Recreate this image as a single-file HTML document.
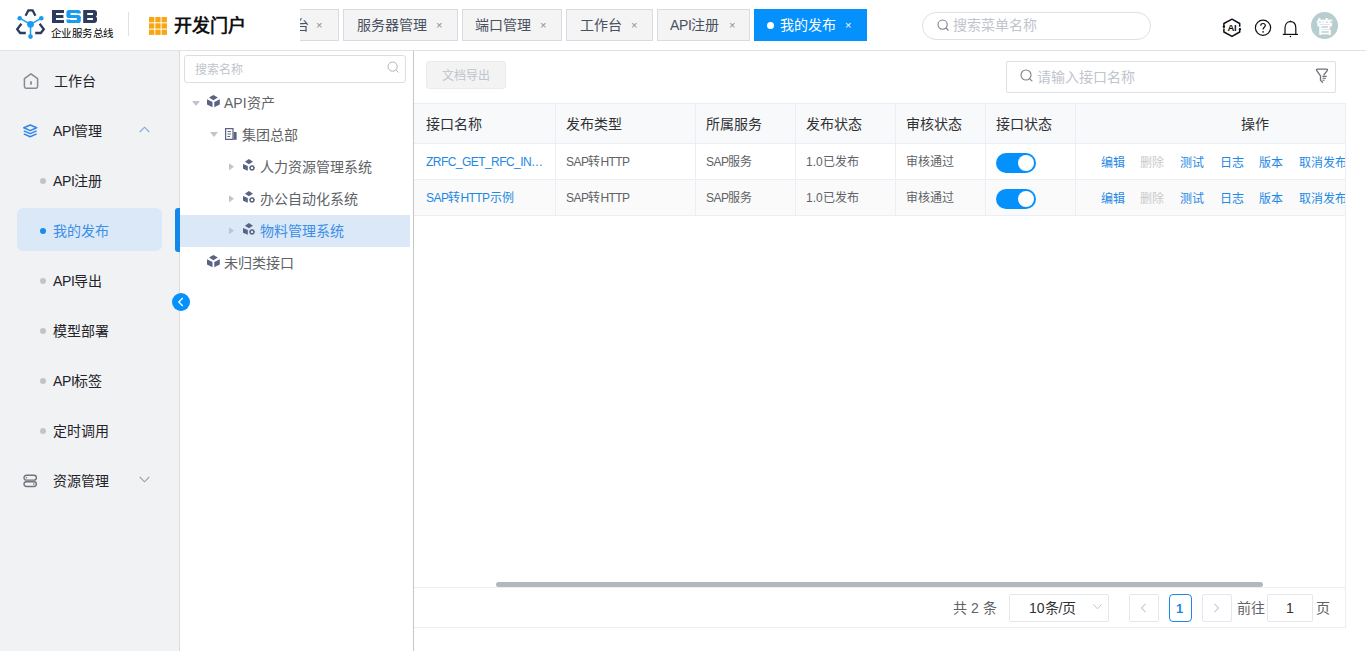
<!DOCTYPE html>
<html lang="zh-CN">
<head>
<meta charset="utf-8">
<style>
*{box-sizing:border-box;margin:0;padding:0}
html,body{width:1366px;height:651px;overflow:hidden;background:#fff;font-family:"Liberation Sans",sans-serif;color:#303133}
.a{position:absolute}
.t{position:absolute;white-space:nowrap;line-height:1}
/* header */
#hdr{position:absolute;left:0;top:0;width:1366px;height:51px;background:#fff;border-bottom:1px solid #e2e2e2}
.tab{position:absolute;top:9px;height:32px;background:#f4f4f5;border:1px solid #d8dbe2;font-size:14px;color:#495060}
.tab .tx{position:absolute;top:7px;line-height:16px;white-space:nowrap}
.tab .x{position:absolute;top:7px;line-height:16px;font-size:11px;color:#8a8f99}
/* sidebar */
#side{position:absolute;left:0;top:51px;width:180px;height:600px;background:#f1f2f4;border-right:1px solid #dcdcdc}
.mi{position:absolute;left:53px;font-size:14px;color:#1f2329;line-height:16px;white-space:nowrap}
.dot{position:absolute;left:40px;width:6px;height:6px;border-radius:50%;background:#c2c4c8}
/* tree */
#tree{position:absolute;left:180px;top:51px;width:234px;height:600px;background:#fff;border-right:1px solid #c6c6c6}
.tn{position:absolute;font-size:14px;color:#606266;line-height:16px;white-space:nowrap}
/* main */
.th{position:absolute;top:116px;font-size:14px;color:#303133;line-height:16px;white-space:nowrap}
.td{position:absolute;font-size:12px;color:#606266;line-height:14px;white-space:nowrap}
.la{letter-spacing:-0.55px}
.lk{color:#1e88e5}
.vl{position:absolute;width:1px;background:#ebeef5}
.hl{position:absolute;height:1px;background:#ebeef5}
.sw{position:absolute;left:996px;width:40px;height:20px;border-radius:10px;background:#0591fc}
.sw:after{content:"";position:absolute;right:2px;top:2px;width:16px;height:16px;border-radius:50%;background:#fff}
.op{position:absolute;font-size:12px;color:#1e88e5;line-height:14px;white-space:nowrap}
.pb{position:absolute;top:594px;height:28px;border:1px solid #e4e7ed;border-radius:2px;background:#fff}
</style>
</head>
<body>
<!-- HEADER -->
<div id="hdr">
  <!-- logo icon -->
  <svg class="a" style="left:15px;top:8px" width="32" height="32" viewBox="0 0 32 32">
    <path d="M10.6 7.8 L13.4 2.3 L17.6 2.3 L20.4 7.8" fill="none" stroke="#2c3b5e" stroke-width="2.3" stroke-linejoin="miter"/>
    <path d="M6.4 15.8 L2.2 21.2 L5.2 25 L10.8 25" fill="none" stroke="#2c3b5e" stroke-width="2.3"/>
    <path d="M24.6 15.8 L28.8 21.2 L25.8 25 L20.2 25" fill="none" stroke="#2c3b5e" stroke-width="2.3"/>
    <path d="M4.7 10.2 L15.5 16.3 L26.3 10.2 M15.5 16.3 L15.5 28.6" fill="none" stroke="#1a9bf2" stroke-width="1.5"/>
    <circle cx="15.5" cy="16.3" r="3.4" fill="#1a9bf2"/>
    <circle cx="4.7" cy="10.2" r="2.3" fill="#1a9bf2"/>
    <circle cx="26.3" cy="10.2" r="2.3" fill="#1a9bf2"/>
    <circle cx="15.5" cy="28.6" r="2.3" fill="#1a9bf2"/>
  </svg>
  <svg class="a" style="left:52px;top:10px" width="46" height="13" viewBox="0 0 46 13">
    <path d="M0 0 H12 V3 H4 V5 H11.4 V8 H4 V10 H12 V13 H0 Z" fill="#2c3b5e"/>
    <path d="M17 0 H26 Q28.8 0 28.8 2.6 V3.6 H24.8 V3 H18.6 V5 H26.2 Q28.8 5 28.8 7.6 V10.4 Q28.8 13 26.2 13 H17 Q14.4 13 14.4 10.4 V9.4 H18.4 V10 H24.8 V8 H17 Q14.4 8 14.4 5.4 V2.6 Q14.4 0 17 0 Z" fill="#1a9bf2"/>
    <path fill-rule="evenodd" d="M31.2 0 H42 Q45 0 45 3 V4.4 Q45 5.8 43.8 6.5 Q45 7.2 45 8.6 V10 Q45 13 42 13 H31.2 Z M35.2 3 V5.1 H41 V3 Z M35.2 7.9 V10 H41 V7.9 Z" fill="#2c3b5e"/>
  </svg>
  <div class="t" style="left:51px;top:28px;font-size:10.5px;font-weight:500;letter-spacing:0.4px;color:#000">企业服务总线</div>
  <div class="a" style="left:128px;top:12px;width:1px;height:24px;background:#dfe1e5"></div>
  <!-- orange grid -->
  <svg class="a" style="left:149px;top:17px" width="18" height="18" viewBox="0 0 18 18">
    <g fill="#f7a714">
      <rect x="0" y="0" width="5.3" height="5.3"/><rect x="6.3" y="0" width="5.3" height="5.3"/><rect x="12.6" y="0" width="5.3" height="5.3"/>
      <rect x="0" y="6.3" width="5.3" height="5.3"/><rect x="6.3" y="6.3" width="5.3" height="5.3"/><rect x="12.6" y="6.3" width="5.3" height="5.3"/>
      <rect x="0" y="12.6" width="5.3" height="5.3"/><rect x="6.3" y="12.6" width="5.3" height="5.3"/><rect x="12.6" y="12.6" width="5.3" height="5.3"/>
    </g>
  </svg>
  <div class="t" style="left:174px;top:17px;font-size:18px;font-weight:bold;color:#111">开发门户</div>

  <!-- tabs -->
  <div class="a" style="left:300px;top:0;width:40px;height:50px;overflow:hidden">
    <div class="tab" style="left:-46px;width:85px"><span class="tx" style="left:12px">工作台</span><span class="x" style="left:61px">×</span></div>
  </div>
  <div class="tab" style="left:343px;width:115px"><span class="tx" style="left:13px">服务器管理</span><span class="x" style="left:92px">×</span></div>
  <div class="tab" style="left:462px;width:100px"><span class="tx" style="left:12px">端口管理</span><span class="x" style="left:77px">×</span></div>
  <div class="tab" style="left:566px;width:87px"><span class="tx" style="left:13px">工作台</span><span class="x" style="left:64px">×</span></div>
  <div class="tab" style="left:657px;width:93px"><span class="tx" style="left:12px"><span style="letter-spacing:-0.4px">API</span>注册</span><span class="x" style="left:71px">×</span></div>
  <div class="tab" style="left:754px;width:113px;background:#0591fc;border-color:#0591fc;color:#fff">
    <span class="a" style="left:12px;top:12px;width:7px;height:7px;border-radius:50%;background:#fff"></span>
    <span class="tx" style="left:25px">我的发布</span><span class="x" style="left:90px;color:#fff">×</span>
  </div>

  <!-- search -->
  <div class="a" style="left:922px;top:12px;width:229px;height:28px;border:1px solid #dcdfe6;border-radius:14px"></div>
  <svg class="a" style="left:937px;top:19px" width="13" height="13" viewBox="0 0 13 13"><circle cx="5.6" cy="5.6" r="4.6" fill="none" stroke="#7d8087" stroke-width="1.1"/><path d="M9 9 L11.5 11.5" stroke="#7d8087" stroke-width="1.1"/></svg>
  <div class="t" style="left:953px;top:18px;font-size:14px;color:#c0c4cc">搜索菜单名称</div>

  <!-- icons -->
  <svg class="a" style="left:1222px;top:18px" width="20" height="20" viewBox="0 0 20 20">
    <path d="M1.9 8.6 L1.9 5.5 L10 1.2 L17.7 5.5 L17.7 8.8" fill="none" stroke="#111" stroke-width="1.5" stroke-linejoin="round"/>
    <path d="M17.7 11.4 L17.7 14 L10 18.4 L1.9 14 L1.9 10.6" fill="none" stroke="#111" stroke-width="1.5" stroke-linejoin="round"/>
    <circle cx="1.9" cy="8.7" r="1.2" fill="#111"/>
    <circle cx="17.9" cy="11.1" r="1.2" fill="#111"/>
    <text x="9.9" y="12.9" text-anchor="middle" font-size="9.5" font-weight="bold" fill="#111" font-family="Liberation Sans" letter-spacing="-0.3">AI</text>
  </svg>
  <svg class="a" style="left:1254px;top:19px" width="18" height="18" viewBox="0 0 18 18">
    <circle cx="9" cy="8.8" r="7.6" fill="none" stroke="#111" stroke-width="1.2"/>
    <path d="M6.7 6.8 C6.7 5.2 7.8 4.5 9 4.5 C10.3 4.5 11.3 5.3 11.3 6.5 C11.3 8.1 9.1 8.4 9.1 10.4" fill="none" stroke="#111" stroke-width="1.2"/>
    <circle cx="9.1" cy="12.9" r="0.8" fill="#111"/>
  </svg>
  <svg class="a" style="left:1282px;top:19px" width="18" height="19" viewBox="0 0 18 19">
    <path d="M3 15.4 L3 9 C3 5 5.3 2.6 8.4 2.6 C11.5 2.6 13.8 5 13.8 9 L13.8 15.4" fill="none" stroke="#111" stroke-width="1.2"/>
    <path d="M0.8 15.4 L16 15.4" stroke="#111" stroke-width="1.2"/>
    <circle cx="8.4" cy="17.5" r="0.8" fill="#111"/>
    <circle cx="8.4" cy="2.3" r="0.8" fill="#111"/>
  </svg>
  <div class="a" style="left:1311px;top:12px;width:27px;height:27px;border-radius:50%;background:#b7cdcf"></div>
  <div class="t" style="left:1316px;top:18.5px;font-size:17px;font-weight:bold;color:#fff">管</div>
</div>

<!-- SIDEBAR -->
<div id="side"></div>
<!-- home icon -->
<svg class="a" style="left:23px;top:73px" width="16" height="17" viewBox="0 0 16 17">
  <path d="M1.4 5.6 L8 0.9 L14.6 5.6 L14.6 13.6 Q14.6 15.2 13 15.2 L3 15.2 Q1.4 15.2 1.4 13.6 Z" fill="none" stroke="#858a93" stroke-width="1.5" stroke-linejoin="round"/>
  <path d="M8 8.2 L8 11.8" stroke="#858a93" stroke-width="1.7"/>
</svg>
<div class="mi" style="left:54px;top:73px">工作台</div>
<!-- layers icon -->
<svg class="a" style="left:23px;top:124px" width="15" height="14" viewBox="0 0 15 14">
  <path d="M7.2 1 L13.6 3.8 L7.2 6.6 L0.8 3.8 Z" fill="none" stroke="#2f84ea" stroke-width="1.5" stroke-linejoin="round"/>
  <path d="M0.8 6.9 L7.2 9.6 L13.6 6.9" fill="none" stroke="#2f84ea" stroke-width="1.5" stroke-linejoin="round"/>
  <path d="M0.8 9.9 L7.2 12.7 L13.6 9.9" fill="none" stroke="#2f84ea" stroke-width="1.5" stroke-linejoin="round"/>
</svg>
<div class="mi" style="top:123px"><span style="letter-spacing:-0.4px">API</span>管理</div>
<svg class="a" style="left:139px;top:126px" width="11" height="7" viewBox="0 0 11 7"><path d="M0.8 6 L5.5 1.2 L10.2 6" fill="none" stroke="#7fa8e0" stroke-width="1.1"/></svg>

<div class="dot" style="top:178px"></div><div class="mi" style="top:173px"><span style="letter-spacing:-0.4px">API</span>注册</div>
<div class="a" style="left:17px;top:208px;width:145px;height:43px;border-radius:6px;background:#dae8f7"></div>
<div class="dot" style="top:228px;background:#1a8cf0"></div><div class="mi" style="top:223px;color:#3b8fe6">我的发布</div>
<div class="dot" style="top:278px"></div><div class="mi" style="top:273px"><span style="letter-spacing:-0.4px">API</span>导出</div>
<div class="dot" style="top:328px"></div><div class="mi" style="top:323px">模型部署</div>
<div class="dot" style="top:378px"></div><div class="mi" style="top:373px"><span style="letter-spacing:-0.4px">API</span>标签</div>
<div class="dot" style="top:428px"></div><div class="mi" style="top:423px">定时调用</div>
<!-- server icon -->
<svg class="a" style="left:23px;top:474px" width="15" height="14" viewBox="0 0 15 14">
  <rect x="1" y="1.3" width="12.4" height="4.8" rx="2.4" fill="none" stroke="#6f747d" stroke-width="1.4"/>
  <rect x="1" y="7.7" width="12.4" height="4.8" rx="2.4" fill="none" stroke="#6f747d" stroke-width="1.4"/>
  <circle cx="3.4" cy="3.7" r="0.8" fill="#6f747d"/><circle cx="10.8" cy="10.1" r="0.8" fill="#6f747d"/>
</svg>
<div class="mi" style="top:473px">资源管理</div>
<svg class="a" style="left:139px;top:476px" width="11" height="7" viewBox="0 0 11 7"><path d="M0.8 1 L5.5 5.8 L10.2 1" fill="none" stroke="#9aa0a8" stroke-width="1.1"/></svg>

<!-- TREE -->
<div id="tree"></div>
<div class="a" style="left:175px;top:208px;width:5px;height:44px;border-radius:3px 0 0 3px;background:#1289ea"></div>
<div class="a" style="left:172px;top:293px;width:18px;height:18px;border-radius:50%;background:#0591fc"></div>
<svg class="a" style="left:172px;top:293px" width="18" height="18" viewBox="0 0 18 18"><path d="M10.8 5 L6.8 9 L10.8 13" fill="none" stroke="#fff" stroke-width="1.3"/></svg>

<div class="a" style="left:184px;top:55px;width:222px;height:28px;border:1px solid #dedede;border-radius:3px"></div>
<div class="t" style="left:195px;top:64px;font-size:12px;color:#c0c4cc">搜索名称</div>
<svg class="a" style="left:387px;top:61px" width="13" height="13" viewBox="0 0 13 13"><circle cx="5.6" cy="5.6" r="4.6" fill="none" stroke="#b0b3b9" stroke-width="1"/><path d="M9 9 L11.5 11.5" stroke="#b0b3b9" stroke-width="1"/></svg>

<div class="a" style="left:180px;top:215px;width:230px;height:32px;background:#dae8f7"></div>

<!-- row1 -->
<svg class="a" style="left:192px;top:101px" width="8" height="6" viewBox="0 0 8 6"><path d="M0 0 L8 0 L4 5 Z" fill="#c0c4cc"/></svg>
<svg class="a" style="left:206px;top:95px" width="14" height="13" viewBox="0 0 14 13"><path d="M7.4 0 L11.8 2.6 L7.4 5.2 L3 2.6 Z" fill="#5b6382"/><path d="M1 4.2 L6.5 7 L6.5 12.2 L1 9.6 Z" fill="#5b6382"/><path d="M13.8 4.2 L8.3 7 L8.3 12.2 L13.8 9.6 Z" fill="#5b6382"/></svg>
<div class="tn" style="left:224px;top:95px">API资产</div>
<!-- row2 -->
<svg class="a" style="left:210px;top:132px" width="8" height="6" viewBox="0 0 8 6"><path d="M0 0 L8 0 L4 5 Z" fill="#c0c4cc"/></svg>
<svg class="a" style="left:225px;top:128px" width="12" height="12" viewBox="0 0 12 12"><path d="M0.6 0.6 L8 0.6 L8 11.4 L0.6 11.4 Z" fill="none" stroke="#5b6382" stroke-width="1.2"/><rect x="8.6" y="4" width="3" height="7.8" fill="#5b6382"/><path d="M2.5 3.5 L6 3.5 M2.5 6 L6 6 M2.5 8.5 L5 8.5" stroke="#5b6382" stroke-width="1"/></svg>
<div class="tn" style="left:242px;top:127px">集团总部</div>
<!-- rows 3-5 -->
<svg class="a" style="left:229px;top:163px" width="6" height="8" viewBox="0 0 6 8"><path d="M0 0.3 L5 3.8 L0 7.3 Z" fill="#c0c4cc"/></svg>
<svg class="a" style="left:243px;top:159px" width="13" height="12" viewBox="0 0 13 12"><path d="M5.9 0 L10 2.7 L5.9 5.3 L1.9 2.7 Z" fill="#5b6382"/><path d="M0 5 L4.8 7 L4.8 11.8 L0 9.8 Z" fill="#5b6382"/><circle cx="9" cy="8.9" r="2.4" fill="#5b6382"/><path d="M9 5.9 V11.9 M6 8.9 H12 M6.9 6.8 L11.1 11 M11.1 6.8 L6.9 11" stroke="#5b6382" stroke-width="1.1"/><circle cx="9" cy="8.9" r="1.2" fill="#fff"/></svg>
<div class="tn" style="left:260px;top:159px">人力资源管理系统</div>
<svg class="a" style="left:229px;top:195px" width="6" height="8" viewBox="0 0 6 8"><path d="M0 0.3 L5 3.8 L0 7.3 Z" fill="#c0c4cc"/></svg>
<svg class="a" style="left:243px;top:191px" width="13" height="12" viewBox="0 0 13 12"><path d="M5.9 0 L10 2.7 L5.9 5.3 L1.9 2.7 Z" fill="#5b6382"/><path d="M0 5 L4.8 7 L4.8 11.8 L0 9.8 Z" fill="#5b6382"/><circle cx="9" cy="8.9" r="2.4" fill="#5b6382"/><path d="M9 5.9 V11.9 M6 8.9 H12 M6.9 6.8 L11.1 11 M11.1 6.8 L6.9 11" stroke="#5b6382" stroke-width="1.1"/><circle cx="9" cy="8.9" r="1.2" fill="#fff"/></svg>
<div class="tn" style="left:260px;top:191px">办公自动化系统</div>
<svg class="a" style="left:229px;top:227px" width="6" height="8" viewBox="0 0 6 8"><path d="M0 0.3 L5 3.8 L0 7.3 Z" fill="#c0c4cc"/></svg>
<svg class="a" style="left:243px;top:223px" width="13" height="12" viewBox="0 0 13 12"><path d="M5.9 0 L10 2.7 L5.9 5.3 L1.9 2.7 Z" fill="#5b6382"/><path d="M0 5 L4.8 7 L4.8 11.8 L0 9.8 Z" fill="#5b6382"/><circle cx="9" cy="8.9" r="2.4" fill="#5b6382"/><path d="M9 5.9 V11.9 M6 8.9 H12 M6.9 6.8 L11.1 11 M11.1 6.8 L6.9 11" stroke="#5b6382" stroke-width="1.1"/><circle cx="9" cy="8.9" r="1.2" fill="#dae8f7"/></svg>
<div class="tn" style="left:260px;top:223px;color:#3b8fe6">物料管理系统</div>
<!-- row6 -->
<svg class="a" style="left:206px;top:255px" width="14" height="13" viewBox="0 0 14 13"><path d="M7.4 0 L11.8 2.6 L7.4 5.2 L3 2.6 Z" fill="#5b6382"/><path d="M1 4.2 L6.5 7 L6.5 12.2 L1 9.6 Z" fill="#5b6382"/><path d="M13.8 4.2 L8.3 7 L8.3 12.2 L13.8 9.6 Z" fill="#5b6382"/></svg>
<div class="tn" style="left:224px;top:255px">未归类接口</div>

<!-- MAIN -->
<div class="a" style="left:426px;top:61px;width:80px;height:28px;border:1px solid #ebebeb;border-radius:3px;background:#f3f3f3"></div>
<div class="t" style="left:442px;top:70px;font-size:12px;color:#c0c4cc">文档导出</div>

<div class="a" style="left:1006px;top:61px;width:330px;height:32px;border:1px solid #dcdfe6;border-radius:2px"></div>
<svg class="a" style="left:1020px;top:69px" width="14" height="14" viewBox="0 0 14 14"><circle cx="6" cy="6" r="5" fill="none" stroke="#7d8087" stroke-width="1.1"/><path d="M9.6 9.6 L12.3 12.3" stroke="#7d8087" stroke-width="1.1"/></svg>
<div class="t" style="left:1037px;top:70px;font-size:14px;color:#c0c4cc">请输入接口名称</div>
<svg class="a" style="left:1315px;top:68px" width="14" height="16" viewBox="0 0 14 16"><path d="M8.9 6.9 L12.2 2.7 Q13.1 1.2 11.5 1.2 L2.5 1.2 Q0.9 1.2 1.8 2.7 L5.5 7.9 L5.5 12.4 L7.5 14.3" fill="none" stroke="#6c6f75" stroke-width="1.3" stroke-linejoin="round" stroke-linecap="round"/><path d="M7.4 8.4 L11.7 8.4 M7.4 10.3 L10.9 10.3 M7.4 12.3 L9.6 12.3" stroke="#6c6f75" stroke-width="1.1"/></svg>

<!-- table -->
<div class="a" style="left:414px;top:103px;width:932px;height:40px;background:#f8f9fb"></div>
<div class="a" style="left:414px;top:179px;width:932px;height:36px;background:#fafafa"></div>
<div class="hl" style="left:414px;top:103px;width:932px"></div>
<div class="hl" style="left:414px;top:143px;width:932px"></div>
<div class="hl" style="left:414px;top:179px;width:932px"></div>
<div class="hl" style="left:414px;top:215px;width:932px"></div>
<div class="vl" style="left:555px;top:103px;height:113px"></div>
<div class="vl" style="left:695px;top:103px;height:113px"></div>
<div class="vl" style="left:795px;top:103px;height:113px"></div>
<div class="vl" style="left:895px;top:103px;height:113px"></div>
<div class="vl" style="left:985px;top:103px;height:113px"></div>
<div class="vl" style="left:1075px;top:103px;height:113px"></div>
<div class="vl" style="left:1345px;top:103px;height:525px"></div>

<div class="th" style="left:426px">接口名称</div>
<div class="th" style="left:566px">发布类型</div>
<div class="th" style="left:706px">所属服务</div>
<div class="th" style="left:806px">发布状态</div>
<div class="th" style="left:906px">审核状态</div>
<div class="th" style="left:996px">接口状态</div>
<div class="th" style="left:1241px">操作</div>

<div class="td lk" style="left:426px;top:155px"><span class="la">ZRFC_GET_RFC_IN</span>…</div>
<div class="td" style="left:566px;top:155px"><span class="la">SAP</span>转<span class="la">HTTP</span></div>
<div class="td" style="left:706px;top:155px"><span class="la">SAP</span>服务</div>
<div class="td" style="left:806px;top:155px">1.0已发布</div>
<div class="td" style="left:906px;top:155px">审核通过</div>
<div class="sw" style="top:153px"></div>
<div class="op" style="left:1101px;top:156px">编辑</div>
<div class="op" style="left:1140px;top:156px;color:#c8cacd">删除</div>
<div class="op" style="left:1180px;top:156px">测试</div>
<div class="op" style="left:1220px;top:156px">日志</div>
<div class="op" style="left:1259px;top:156px">版本</div>
<div class="a" style="left:1299px;top:150px;width:46px;height:24px;overflow:hidden"><div class="op" style="left:0;top:6px">取消发布</div></div>

<div class="td lk" style="left:426px;top:191px"><span class="la">SAP</span>转<span class="la">HTTP</span>示例</div>
<div class="td" style="left:566px;top:191px"><span class="la">SAP</span>转<span class="la">HTTP</span></div>
<div class="td" style="left:706px;top:191px"><span class="la">SAP</span>服务</div>
<div class="td" style="left:806px;top:191px">1.0已发布</div>
<div class="td" style="left:906px;top:191px">审核通过</div>
<div class="sw" style="top:189px"></div>
<div class="op" style="left:1101px;top:192px">编辑</div>
<div class="op" style="left:1140px;top:192px;color:#c8cacd">删除</div>
<div class="op" style="left:1180px;top:192px">测试</div>
<div class="op" style="left:1220px;top:192px">日志</div>
<div class="op" style="left:1259px;top:192px">版本</div>
<div class="a" style="left:1299px;top:186px;width:46px;height:24px;overflow:hidden"><div class="op" style="left:0;top:6px">取消发布</div></div>

<!-- scrollbar -->
<div class="a" style="left:496px;top:582px;width:767px;height:5px;border-radius:3px;background:#b4b7bc"></div>
<!-- pagination -->
<div class="hl" style="left:414px;top:587px;width:932px"></div>
<div class="hl" style="left:414px;top:627px;width:932px"></div>
<div class="t" style="left:953px;top:601px;font-size:14px;color:#606266">共 2 条</div>
<div class="pb" style="left:1009px;width:100px"></div>
<div class="t" style="left:1029px;top:601px;font-size:14px;color:#303133">10条/页</div>
<svg class="a" style="left:1093px;top:604px" width="9" height="6" viewBox="0 0 9 6"><path d="M0.5 0.5 L4.5 4.8 L8.5 0.5" fill="none" stroke="#c0c4cc" stroke-width="1"/></svg>
<div class="pb" style="left:1129px;width:30px"></div>
<svg class="a" style="left:1140px;top:603px" width="7" height="10" viewBox="0 0 7 10"><path d="M5.5 0.8 L1.5 5 L5.5 9.2" fill="none" stroke="#c8cbd0" stroke-width="1.1"/></svg>
<div class="pb" style="left:1169px;width:23px;border-color:#1e88e5;border-radius:4px"></div>
<div class="t" style="left:1176px;top:602px;font-size:13px;font-weight:bold;color:#1e88e5">1</div>
<div class="pb" style="left:1202px;width:30px"></div>
<svg class="a" style="left:1213px;top:603px" width="7" height="10" viewBox="0 0 7 10"><path d="M1.5 0.8 L5.5 5 L1.5 9.2" fill="none" stroke="#c8cbd0" stroke-width="1.1"/></svg>
<div class="t" style="left:1237px;top:601px;font-size:14px;color:#606266">前往</div>
<div class="pb" style="left:1267px;width:46px"></div>
<div class="t" style="left:1286px;top:601px;font-size:14px;color:#303133">1</div>
<div class="t" style="left:1316px;top:601px;font-size:14px;color:#606266">页</div>
</body>
</html>
